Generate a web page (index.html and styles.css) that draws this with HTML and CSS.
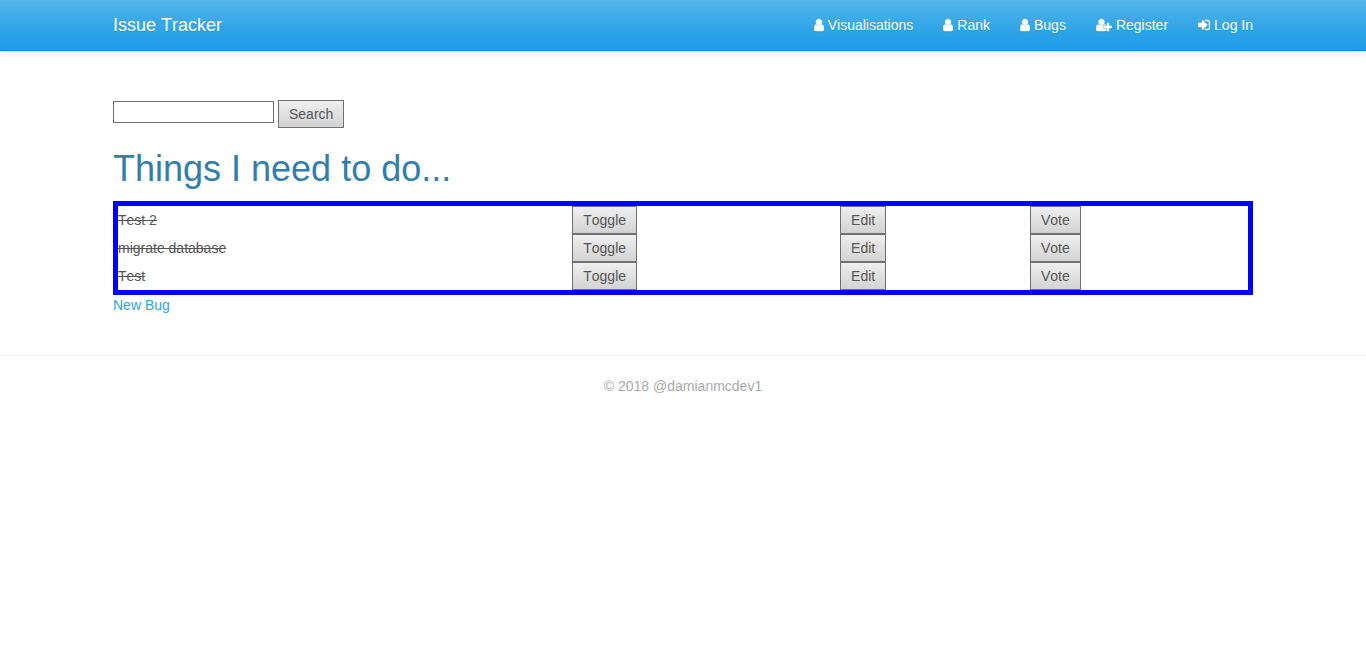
FILE: index.html
```html
<!DOCTYPE html>
<html lang="en">
<head>
<meta charset="utf-8">
<meta name="viewport" content="width=device-width, initial-scale=1">
<title>Issue Tracker</title>
<link rel="stylesheet" href="styles.css">
</head>
<body>
<svg class="sprite" aria-hidden="true">
  <symbol id="icon-user" viewBox="256 0 1280 1792"><path d="M1536 1399q0 109-62.5 187t-150.5 78h-854q-88 0-150.5-78t-62.5-187q0-85 8.5-160.5t31.5-152 58.5-131 94-89 134.5-34.5q131 128 313 128t313-128q76 0 134.5 34.5t94 89 58.5 131 31.5 152 8.5 160.5zm-256-887q0 159-112.5 271.5t-271.5 112.5-271.5-112.5-112.5-271.5 112.5-271.5 271.5-112.5 271.5 112.5 112.5 271.5z"/></symbol>
  <symbol id="icon-user-plus" viewBox="0 0 2048 1792"><path d="M704 896q-159 0-271.5-112.5t-112.5-271.5 112.5-271.5 271.5-112.5 271.5 112.5 112.5 271.5-112.5 271.5-271.5 112.5zm960 128h352q13 0 22.5 9.5t9.5 22.5v192q0 13-9.5 22.5t-22.5 9.5h-352v352q0 13-9.5 22.5t-22.5 9.5h-192q-13 0-22.5-9.5t-9.5-22.5v-352h-352q-13 0-22.5-9.5t-9.5-22.5v-192q0-13 9.5-22.5t22.5-9.5h352v-352q0-13 9.5-22.5t22.5-9.5h192q13 0 22.5 9.5t9.5 22.5v352zm-736 224q0 52 38 90t90 38h256v238q-68 50-171 50h-874q-121 0-194-69t-73-190q0-53 3.5-103.5t14-109 26.5-108.5 43-97.5 62-81 85.5-53.5 111.5-20q19 0 39 17 79 61 154.5 91.5t164.5 30.5 164.5-30.5 154.5-91.5q20-17 39-17 132 0 217 96h-223q-52 0-90 38t-38 90v192z"/></symbol>
  <symbol id="icon-sign-in" viewBox="128 0 1536 1792"><path d="M1312 896q0 26-19 45l-544 544q-19 19-45 19t-45-19-19-45v-288h-448q-26 0-45-19t-19-45v-384q0-26 19-45t45-19h448v-288q0-26 19-45t45-19 45 19l544 544q19 19 19 45zm352-352v704q0 119-84.5 203.5t-203.5 84.5h-320q-13 0-22.5-9.5t-9.5-22.5q0-4-1-20t-.5-26.5 3-23.5 10-19.5 20.5-6.5h320q66 0 113-47t47-113v-704q0-66-47-113t-113-47h-312l-11.5-1-11.5-3-8-5.5-7-9-2-13.5q0-4-1-20t-.5-26.5 3-23.5 10-19.5 20.5-6.5h320q119 0 203.5 84.5t84.5 203.5z"/></symbol>
</svg>

<header class="navbar">
  <div class="container navbar-inner">
    <a class="brand" href="#">Issue Tracker</a>
    <nav class="nav">
      <a class="nav-link" href="#"><svg class="icon icon-user"><use href="#icon-user"/></svg>Visualisations</a>
      <a class="nav-link" href="#"><svg class="icon icon-user"><use href="#icon-user"/></svg>Rank</a>
      <a class="nav-link" href="#"><svg class="icon icon-user"><use href="#icon-user"/></svg>Bugs</a>
      <a class="nav-link" href="#"><svg class="icon icon-user-plus"><use href="#icon-user-plus"/></svg>Register</a>
      <a class="nav-link" href="#"><svg class="icon icon-sign-in"><use href="#icon-sign-in"/></svg>Log In</a>
    </nav>
  </div>
</header>

<main class="container main">
  <form class="search">
    <input class="search-input" type="text" name="q" aria-label="Search bugs">
    <button class="button" type="submit">Search</button>
  </form>
  <h1 class="title">Things I need to do...</h1>
  <table class="bugs">
    <colgroup>
      <col class="col-name"><col class="col-toggle"><col class="col-edit"><col class="col-vote">
    </colgroup>
    <tbody>
      <tr>
        <td class="done">Test 2</td>
        <td><button class="button" type="button">Toggle</button></td>
        <td><button class="button" type="button">Edit</button></td>
        <td><button class="button" type="button">Vote</button></td>
      </tr>
      <tr>
        <td class="done">migrate database</td>
        <td><button class="button" type="button">Toggle</button></td>
        <td><button class="button" type="button">Edit</button></td>
        <td><button class="button" type="button">Vote</button></td>
      </tr>
      <tr>
        <td class="done">Test</td>
        <td><button class="button" type="button">Toggle</button></td>
        <td><button class="button" type="button">Edit</button></td>
        <td><button class="button" type="button">Vote</button></td>
      </tr>
    </tbody>
  </table>
  <a class="link" href="#">New Bug</a>
</main>

<footer class="footer">© 2018 @damianmcdev1</footer>
</body>
</html>
```
FILE: styles.css
```css
* {
  box-sizing: border-box;
}

body {
  margin: 0;
  font-family: "Liberation Sans", Arial, sans-serif;
  font-size: 14px;
  line-height: 20px;
  font-kerning: none;
  color: #555;
  background: #fff;
}

a {
  text-decoration: none;
}

.sprite {
  display: none;
}

.container {
  max-width: 1170px;
  margin: 0 auto;
  padding: 0 15px;
}

.navbar {
  background: linear-gradient(#54b4eb, #2fa4e7 60%, #1d9ce5);
  border-bottom: 1px solid #178acc;
  box-shadow: 0 1px 10px rgba(0, 0, 0, 0.1);
  text-shadow: 0 1px 0 rgba(0, 0, 0, 0.1);
}

.navbar-inner {
  display: flex;
  flex-wrap: wrap;
  align-items: center;
  justify-content: space-between;
  min-height: 50px;
}

.brand {
  font-size: 18px;
  color: #fff;
}

.nav {
  display: flex;
  flex-wrap: wrap;
  gap: 0 30px;
}

.nav-link {
  display: flex;
  align-items: center;
  gap: 4px;
  color: #fff;
}

.icon {
  height: 14px;
  fill: currentColor;
  stroke: currentColor;
  stroke-width: 60;
  filter: drop-shadow(0 1px 0 rgba(0, 0, 0, 0.1));
}

.icon-user {
  width: 10px;
}

.icon-user-plus {
  width: 16px;
}

.icon-sign-in {
  width: 12px;
}

.main {
  padding-top: 49px;
}

.search {
  display: flex;
  align-items: flex-start;
  gap: 4px;
}

.search-input {
  width: 161px;
  height: 22px;
  margin: 1px 0 0;
  padding: 1px 2px;
  border: 1px solid #707070;
  font: inherit;
  color: inherit;
}

.button {
  display: block;
  margin: 0;
  padding: 3px 10px;
  border: 1px solid #707070;
  border-radius: 0;
  background: linear-gradient(#efefef, #d3d3d3);
  font: inherit;
  font-kerning: none;
  color: #555;
}

.title {
  margin: 20px 0 12px;
  font-size: 36px;
  line-height: 41px;
  font-weight: 400;
  color: #317eac;
}

.bugs {
  width: 100%;
  table-layout: fixed;
  border: 5px solid #00f;
  border-spacing: 0;
}

.bugs td {
  padding: 0;
}

.col-name {
  width: 40.2%;
}

.col-toggle {
  width: 23.7%;
}

.col-edit {
  width: 16.8%;
}

.done {
  text-decoration: line-through;
}

.link {
  color: #2fa4e7;
}

.footer {
  margin-top: 40px;
  padding: 20px 0;
  border-top: 1px solid #eee;
  text-align: center;
  color: #aaa;
}
```
